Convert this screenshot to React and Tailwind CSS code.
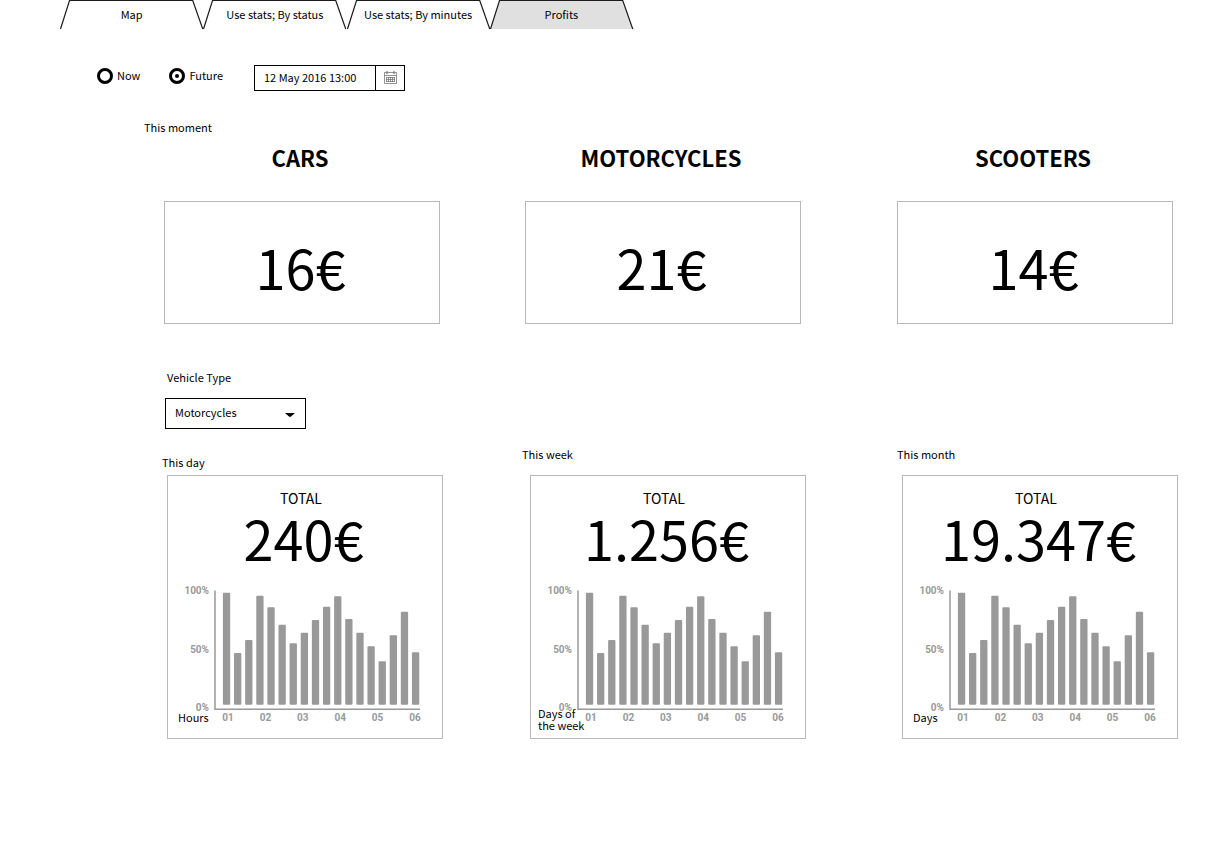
import { useState } from "react";

const TABS = ["Map", "Use stats; By status", "Use stats; By minutes", "Profits"];

const MOMENT = [
  { name: "CARS", amount: "16€", column: "" },
  { name: "MOTORCYCLES", amount: "21€", column: "ml-[85px]" },
  { name: "SCOOTERS", amount: "14€", column: "ml-24" },
];

const TOTALS = [
  {
    title: "This day", amount: "240€", unit: "Hours",
    column: "", label: "pt-2", card: "ml-[5px]", caption: "left-[10px] top-[235px]",
  },
  {
    title: "This week", amount: "1.256€", unit: "Days of the week",
    column: "ml-[79px]", label: "", card: "ml-2", caption: "left-[7px] top-[231px] w-[52px]",
  },
  {
    title: "This month", amount: "19.347€", unit: "Days",
    column: "ml-[91px]", label: "", card: "ml-[5px]", caption: "left-[10px] top-[235px]",
  },
];

const BAR_TOPS = [9.7, 70, 57, 12.7, 24.3, 41.7, 60.3, 49.7, 37, 23.7, 13.3, 36, 49.7, 63.3, 78.3, 52.3, 28.7, 69.3];

function Tab({ label, active, onSelect }) {
  return (
    <button type="button" role="tab" aria-selected={active} onClick={onSelect} className="relative h-[29px] flex-1 pb-0.5">
      <svg viewBox="0 0 143 29" preserveAspectRatio="none" aria-hidden="true" className="absolute inset-0 h-full w-full overflow-visible">
        <path d="M0.5 29 L9.5 0.5 H132.5 L142.5 29" fill={active ? "#e0e0e0" : "#fff"} stroke="#1c1c1c" strokeWidth="1.2" />
      </svg>
      <span className="relative">{label}</span>
    </button>
  );
}

function CalendarIcon() {
  return (
    <svg viewBox="0 0 13 13" aria-hidden="true" className="h-[13px] w-[13px]" fill="none" stroke="#777">
      <path d="M0.5 1.5H12.5V12.5H0.5ZM0.5 4.5H12.5" strokeWidth="0.8" />
      <path d="M3 0V3.2M10 0V3.2" strokeWidth="1.2" />
      <path d="M2.5 6.5H11M2 8.5H11M2 10.5H11M2.5 6V11M4.5 6V11M6.5 6V11M8.5 6V11M10.5 6V11" strokeWidth="0.8" />
    </svg>
  );
}

function Chart({ name }) {
  return (
    <svg viewBox="0 0 274 142" role="img" aria-label={name} className="block w-full font-[Roboto,sans-serif] text-[10px] font-bold" fill="#999">
      <text x="41" y="11" textAnchor="end">100%</text>
      <text x="41" y="70" textAnchor="end">50%</text>
      <text x="41" y="128" textAnchor="end">0%</text>
      <path d="M47 7.5V126.3H252" fill="none" stroke="#999" strokeWidth="1.5" />
      {BAR_TOPS.map((top, i) => (
        <rect key={i} x={54.9 + i * 11.12} y={top} width="7.3" height={121.8 - top} rx="1" />
      ))}
      {["01", "02", "03", "04", "05", "06"].map((t, i) => (
        <text key={t} x={60 + i * 37.4} y="138" textAnchor="middle">{t}</text>
      ))}
    </svg>
  );
}

function Radio({ label, checked, onChange }) {
  return (
    <label className="flex items-center gap-1">
      <input
        type="radio"
        name="period"
        checked={checked}
        onChange={onChange}
        className="grid h-4 w-4 appearance-none place-content-center rounded-full border-[3px] border-black before:h-1 before:w-1 before:rounded-full checked:before:bg-black"
      />
      <span className="pb-0.5">{label}</span>
    </label>
  );
}

export default function App() {
  const [tab, setTab] = useState("Profits");
  const [period, setPeriod] = useState("Future");
  return (
    <div className="min-h-screen bg-white font-['Noto_Sans_CJK_SC',sans-serif] text-[11px] leading-4 text-black">
      <nav role="tablist" className="ml-[60px] flex max-w-[573px]">
        {TABS.map((t) => (
          <Tab key={t} label={t} active={t === tab} onSelect={() => setTab(t)} />
        ))}
      </nav>

      <form className="mt-9 ml-[97px] flex h-[26px] items-center">
        <div className="flex w-[157px] gap-[29px] pb-1">
          <Radio label="Now" checked={period === "Now"} onChange={() => setPeriod("Now")} />
          <Radio label="Future" checked={period === "Future"} onChange={() => setPeriod("Future")} />
        </div>
        <div className="flex h-[26px] border border-black">
          <input aria-label="Date and time" defaultValue="12 May 2016 13:00" className="w-[120px] pb-0.5 pl-[9px] outline-none" />
          <button type="button" aria-label="Open calendar" className="grid w-[29px] place-content-center border-l border-black pb-px">
            <CalendarIcon />
          </button>
        </div>
      </form>

      <main>
        <h2 className="mt-7 ml-36">This moment</h2>
        <div className="ml-[164px] flex pr-[54px]">
          {MOMENT.map((m) => (
            <section key={m.name} className={`flex-1 text-center ${m.column}`}>
              <h3 className="mt-1.5 pr-1 text-[22px] leading-8 font-bold">{m.name}</h3>
              <p className="mt-7 flex h-[123px] items-center justify-center border border-[#b8b8b8] pt-2 pr-[3px] text-[54px] leading-[64px]">{m.amount}</p>
            </section>
          ))}
        </div>

        <div className="mt-[45px] ml-[165px] flex flex-col items-start">
          <label htmlFor="vehicle" className="ml-0.5">Vehicle Type</label>
          <div className="relative mt-[13px]">
            <select id="vehicle" defaultValue="Motorcycles" className="h-[31px] w-[141px] appearance-none border border-black bg-white pb-[3px] pl-[9px]">
              <option>Cars</option>
              <option>Motorcycles</option>
              <option>Scooters</option>
            </select>
            <svg viewBox="0 0 10 4" aria-hidden="true" className="pointer-events-none absolute top-[15px] right-[11px] h-1 w-[10px]">
              <path d="M0 0H10L6 3.6Q5 4.2 4 3.6Z" />
            </svg>
          </div>
        </div>

        <div className="mt-[17px] ml-[162px] grid grid-cols-[281fr_363fr_372fr] pr-[49px]">
          {TOTALS.map((t) => (
            <section key={t.title} className={t.column}>
              <h3 className={`h-6 ${t.label}`}>{t.title}</h3>
              <div className={`relative mt-[5px] h-[264px] border border-[#b8b8b8] pt-[10px] ${t.card}`}>
                <p className="pr-2 text-center text-[14px] leading-6">TOTAL</p>
                <p className="pr-[3px] text-center text-[54px] leading-[56px]">{t.amount}</p>
                <div className="mt-[17px]">
                  <Chart name={t.title} />
                </div>
                <p className={`absolute leading-3 ${t.caption}`}>{t.unit}</p>
              </div>
            </section>
          ))}
        </div>
      </main>
    </div>
  );
}
